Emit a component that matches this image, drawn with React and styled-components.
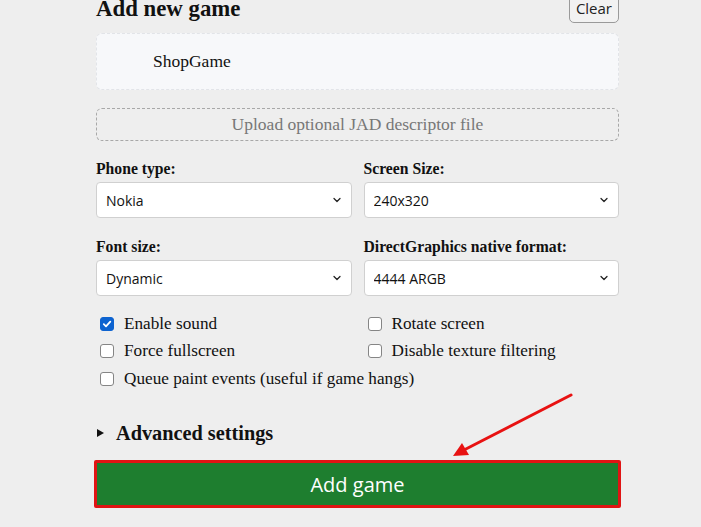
import styled, { createGlobalStyle } from "styled-components";
import { ChevronDown } from "lucide-react";

const GlobalStyle = createGlobalStyle`
  html, body {
    margin: 0;
    background: #eeeeee;
    overflow: hidden;
  }
`;

const Page = styled.div`
  position: relative;
  width: 701px;
  height: 527px;
  overflow: hidden;
`;

const Form = styled.div`
  width: 523px;
  margin: -5px 0 0 96px;
  display: flex;
  flex-direction: column;
  font-family: "Liberation Serif", serif;
  color: #111;
`;

const Header = styled.div`
  height: 28px;
  display: flex;
  justify-content: space-between;
  align-items: flex-end;
`;

const Title = styled.h2`
  margin: 0;
  font-size: 22.8px;
  font-weight: bold;
  line-height: 28px;
  align-self: flex-start;
`;

const ClearButton = styled.button`
  font-family: "Open Sans", "Liberation Sans", sans-serif;
  font-size: 15px;
  color: #222;
  background: #f2f2f2;
  border: 1px solid #9a9a9a;
  border-radius: 5px;
  height: 30px;
  padding: 0 6px;
  margin-right: 0;
`;

const GameBox = styled.div`
  margin-top: 10px;
  height: 57px;
  box-sizing: border-box;
  background: #f7f8fa;
  border: 1px dashed #e2e4e8;
  border-radius: 6px;
  display: flex;
  align-items: center;
  padding-left: 56px;
  font-size: 17.5px;
`;

const UploadBox = styled.div`
  margin-top: 18px;
  height: 33px;
  box-sizing: border-box;
  border: 1px dashed #a8a8a8;
  border-radius: 6px;
  display: flex;
  align-items: center;
  justify-content: center;
  font-size: 17.5px;
  color: #777;
`;

const FieldGrid = styled.div`
  margin-top: 19px;
  display: grid;
  grid-template-columns: 1fr 1fr;
  column-gap: 12px;
  row-gap: 20px;
`;

const Field = styled.label`
  display: flex;
  flex-direction: column;
  gap: 5px;
`;

const Label = styled.span`
  font-size: 15.7px;
  font-weight: bold;
  line-height: 17px;
`;

const SelectWrap = styled.div`
  position: relative;
  height: 36px;

  svg {
    position: absolute;
    right: 9px;
    top: 12px;
    pointer-events: none;
    color: #222;
  }
`;

const Select = styled.select`
  appearance: none;
  width: 100%;
  height: 100%;
  box-sizing: border-box;
  background: #fff;
  border: 1px solid #d0d0d0;
  border-radius: 4px;
  padding: 0 0 0 9px;
  font-family: "Open Sans", "Liberation Sans", sans-serif;
  font-size: 14px;
  color: #111;
`;

const Checks = styled.div`
  margin-top: 14px;
  display: grid;
  grid-template-columns: 1fr 1fr;
  column-gap: 12px;
`;

const CheckRow = styled.label`
  height: 27.5px;
  display: flex;
  align-items: center;
  gap: 10px;
  padding-left: 4px;
  font-size: 17.2px;
  grid-column: ${(p) => (p.$wide ? "1 / -1" : "auto")};
`;

const Box = styled.span`
  width: 14px;
  height: 14px;
  flex: none;
  box-sizing: border-box;
  border-radius: 3px;
  border: 1px solid ${(p) => (p.$on ? "#0d63d0" : "#858585")};
  background: ${(p) => (p.$on ? "#0d63d0" : "#fff")};
  display: flex;
  align-items: center;
  justify-content: center;
`;

const Summary = styled.div`
  margin-top: 29px;
  display: flex;
  align-items: center;
  font-size: 20.3px;
  font-weight: bold;
  line-height: 23px;
`;

const Marker = styled.span`
  width: 0;
  height: 0;
  border-top: 4px solid transparent;
  border-bottom: 4px solid transparent;
  border-left: 7px solid #111;
  margin: 0 12px 0 1px;
`;

const AddButton = styled.button`
  margin: 15px -2px 0;
  height: 48px;
  box-sizing: border-box;
  padding-top: 3px;
  background: #1e7e2f;
  border: 3px solid #e01414;
  border-radius: 2px;
  color: #fff;
  font-family: "Open Sans", "Noto Sans", sans-serif;
  font-size: 20px;
`;

const Arrow = styled.svg`
  position: absolute;
  left: 0;
  top: 0;
  pointer-events: none;
`;

function Check({ on, children, wide }) {
  return (
    <CheckRow $wide={wide}>
      <Box $on={on}>
        {on && (
          <svg width="10" height="10" viewBox="0 0 10 10">
            <path d="M1.8 5.2 L4 7.3 L8.3 2.7" fill="none" stroke="#fff" strokeWidth="1.8" strokeLinecap="round" strokeLinejoin="round" />
          </svg>
        )}
      </Box>
      {children}
    </CheckRow>
  );
}

function Dropdown({ label, value }) {
  return (
    <Field>
      <Label>{label}</Label>
      <SelectWrap>
        <Select defaultValue={value}>
          <option>{value}</option>
        </Select>
        <ChevronDown size={12} strokeWidth={2.5} />
      </SelectWrap>
    </Field>
  );
}

export default function App() {
  return (
    <>
      <GlobalStyle />
      <Page>
        <Form>
          <Header>
            <Title>Add new game</Title>
            <ClearButton>Clear</ClearButton>
          </Header>
          <GameBox>ShopGame</GameBox>
          <UploadBox>Upload optional JAD descriptor file</UploadBox>
          <FieldGrid>
            <Dropdown label="Phone type:" value="Nokia" />
            <Dropdown label="Screen Size:" value="240x320" />
            <Dropdown label="Font size:" value="Dynamic" />
            <Dropdown label="DirectGraphics native format:" value="4444 ARGB" />
          </FieldGrid>
          <Checks>
            <Check on>Enable sound</Check>
            <Check>Rotate screen</Check>
            <Check>Force fullscreen</Check>
            <Check>Disable texture filtering</Check>
            <Check wide>Queue paint events (useful if game hangs)</Check>
          </Checks>
          <Summary>
            <Marker />
            Advanced settings
          </Summary>
          <AddButton>Add game</AddButton>
        </Form>
        <Arrow width="701" height="527">
          <line x1="571" y1="395" x2="464" y2="450" stroke="#e81212" strokeWidth="3" strokeLinecap="round" />
          <polygon points="453,456 462,443 469,455" fill="#e81212" />
        </Arrow>
      </Page>
    </>
  );
}
